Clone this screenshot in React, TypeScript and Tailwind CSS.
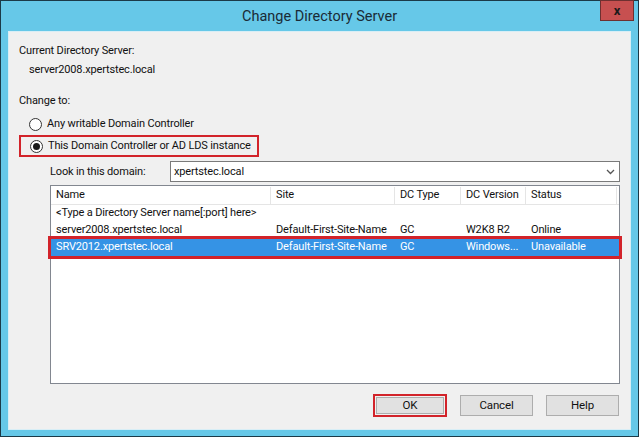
const font = { fontFamily: 'Roboto, "Noto Sans", sans-serif' };

const columns = [
  { label: 'Name', w: 'w-[220px]' },
  { label: 'Site', w: 'w-[124px]' },
  { label: 'DC Type', w: 'w-[66px]' },
  { label: 'DC Version', w: 'w-[65px]' },
  { label: 'Status', w: 'w-[91px]' },
];

const rows = [
  { cells: ['<Type a Directory Server name[:port] here>', '', '', '', ''], selected: false },
  { cells: ['server2008.xpertstec.local', 'Default-First-Site-Name', 'GC', 'W2K8 R2', 'Online'], selected: false },
  { cells: ['SRV2012.xpertstec.local', 'Default-First-Site-Name', 'GC', 'Windows...', 'Unavailable'], selected: true },
];

const Radio = ({ checked }: { checked?: boolean }) => (
  <span className="flex h-[13px] w-[13px] shrink-0 items-center justify-center rounded-full border border-[#333] bg-white">
    {checked && <span className="h-[7px] w-[7px] rounded-full bg-[#1a1a1a]" />}
  </span>
);

const DialogButton = ({ label }: { label: string }) => (
  <button className="flex h-[21px] w-[73px] items-center justify-center border border-[#adadad] bg-[#e1e1e1] text-[11.5px] text-[#111]">
    {label}
  </button>
);

export default function App() {
  return (
    <div
      className="flex h-[437px] w-[639px] flex-col border border-[#1b3a48] bg-[#66c8e8] text-[11px] text-[#111]"
      style={font}
    >
      {/* title bar */}
      <div className="relative flex h-[30px] shrink-0 items-center justify-center pt-[1px]">
        <span className="text-[14.5px] text-[#1a2b36]">Change Directory Server</span>
        <button className="absolute right-[4px] top-[-1px] flex h-[21px] w-[34px] items-center justify-center border border-[#6e3030] bg-[#c75050] text-[13px] font-bold text-[#1a1a1a]">
          x
        </button>
      </div>

      {/* body */}
      <div className="mx-[7px] mb-[6px] flex flex-1 flex-col border border-[#d8eef6] bg-[#f0f0f0] pl-[10px] pr-[10px] tracking-[-0.15px]">
        <div className="mt-[11px] h-[16px] leading-[16px]">Current Directory Server:</div>
        <div className="mt-[3px] h-[16px] pl-[10px] leading-[16px]">server2008.xpertstec.local</div>
        <div className="mt-[15px] h-[16px] leading-[16px]">Change to:</div>

        <div className="mt-[7px] flex h-[16px] items-center gap-[5px] pl-[10px]">
          <Radio />
          <span>Any writable Domain Controller</span>
        </div>
        <div className="mt-[3px] flex h-[22px] w-[240px] items-center gap-[5px] whitespace-nowrap border-2 border-[#d2232a] pl-[9px]">
          <Radio checked />
          <span>This Domain Controller or AD LDS instance</span>
        </div>

        <div className="ml-[31px] mt-[4px] flex h-[21px] items-center">
          <span className="w-[120px] pt-[1px]">Look in this domain:</span>
          <div className="flex h-[21px] flex-1 items-center justify-between border border-[#7a7a7a] bg-white pl-[3px] pr-[4px]">
            <span className="pt-[1px]">xpertstec.local</span>
            <svg width="9" height="6" viewBox="0 0 9 6">
              <path d="M1 1 L4.5 4.5 L8 1" fill="none" stroke="#555" strokeWidth="1.3" />
            </svg>
          </div>
        </div>

        <div className="ml-[31px] mt-[3px] flex h-[199px] flex-col border border-[#828790] bg-white">
          <div className="flex h-[19px] border-b border-[#e5e5e5] pt-[1px]">
            {columns.map((c) => (
              <div key={c.label} className={`${c.w} flex items-center whitespace-nowrap border-r border-[#e5e5e5] pl-[5px]`}>
                {c.label}
              </div>
            ))}
          </div>
          <div>
            {rows.map((r, i) => (
              <div
                key={i}
                className={
                  r.selected
                    ? 'flex h-[17px] items-center bg-[#3593e5] text-white outline-[3px] outline-solid outline-[#d2232a]'
                    : 'flex h-[17px] items-center'
                }
              >
                {r.cells.map((cell, j) => (
                  <div key={j} className={`${columns[j].w} whitespace-nowrap pl-[5px]`}>
                    {cell}
                  </div>
                ))}
              </div>
            ))}
          </div>
        </div>

        <div className="mt-[10px] flex justify-end gap-[13px] pr-[1px]">
          <div className="border-2 border-[#d2232a] p-[1px]">
            <button className="flex h-[17px] w-[68px] items-center justify-center border border-[#adadad] bg-[#e1e1e1] text-[11.5px] text-[#111]">
              OK
            </button>
          </div>
          <div className="pt-[1px]">
            <DialogButton label="Cancel" />
          </div>
          <div className="pt-[1px]">
            <DialogButton label="Help" />
          </div>
        </div>
      </div>
    </div>
  );
}
